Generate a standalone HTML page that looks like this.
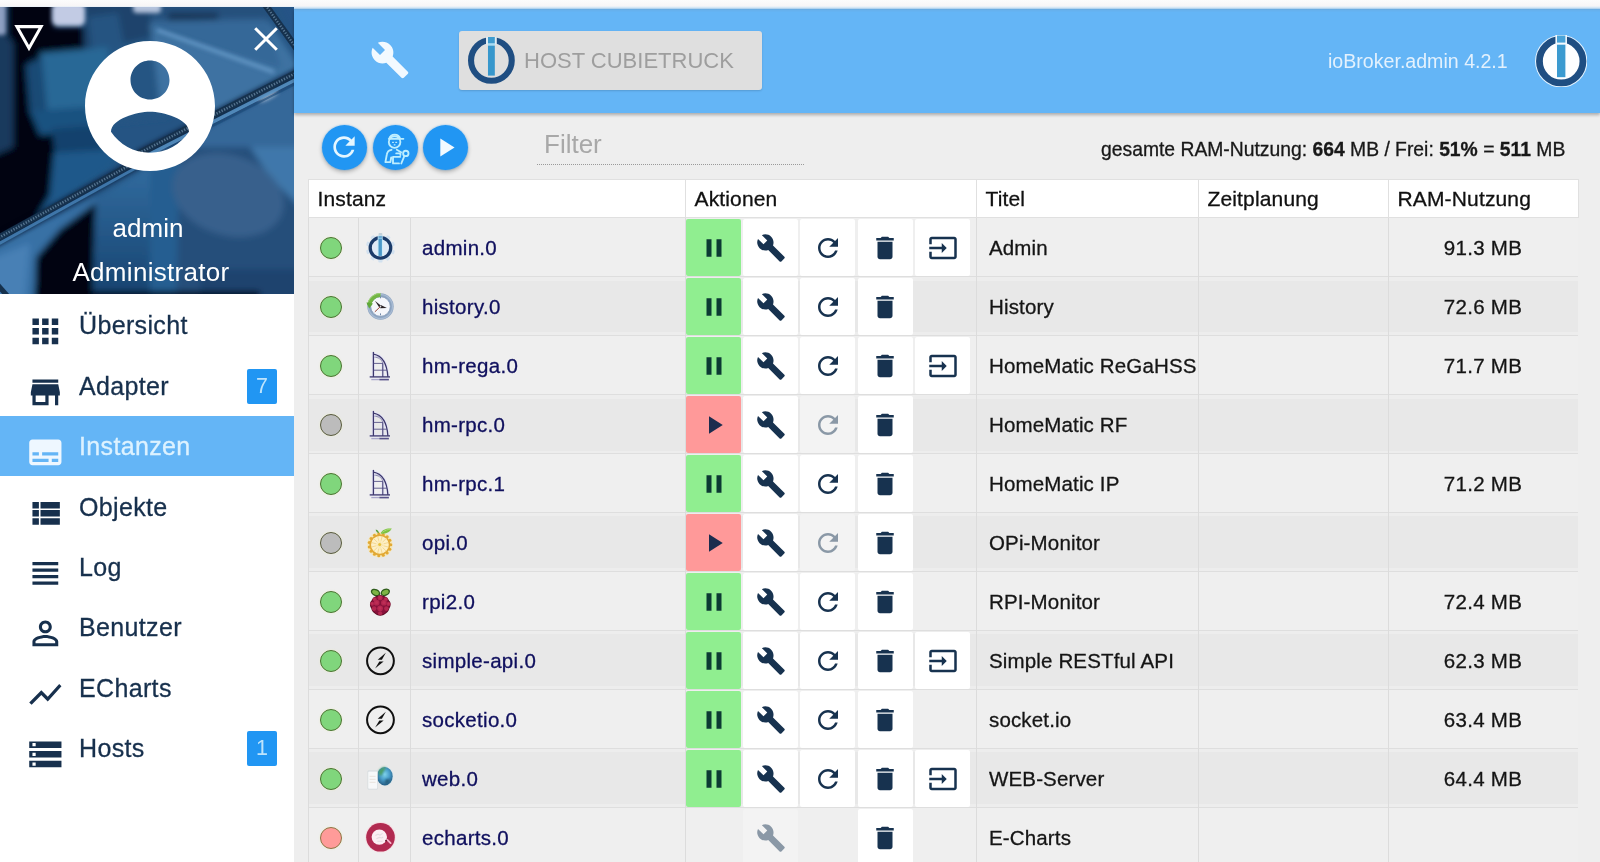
<!DOCTYPE html>
<html lang="de">
<head>
<meta charset="utf-8">
<title>ioBroker.admin</title>
<style>
*{box-sizing:border-box;margin:0;padding:0}
html,body{width:1600px;height:862px;overflow:hidden}
body{position:relative;background:#eeeeee;font-family:"Liberation Sans",sans-serif;color:#111}
.abs{position:absolute}
svg{display:block}
.tx,.nm,.ti,.rm,.th,.uname,#ram,#filter,#ver,#hostbtn .t,.badge{will-change:transform}
.tx,.nm,.ti,.rm,.th,#ram{-webkit-text-stroke:.3px currentColor}
/* top strip */
#topstrip{left:0;top:0;width:1600px;height:9px;background:linear-gradient(#fcfcfc 0,#f8f6f7 5.5px,#e6eff8 7px,#b7d6f0 8.5px,#8fc0ea 9px)}
/* sidebar */
#side{left:0;top:7px;width:294px;height:855px;background:#fff}
#sidehead{left:0;top:0;width:294px;height:287px;overflow:hidden;background:#1d4a78}
.uname{left:0;width:294px;text-align:center;color:#fff;font-size:26px;line-height:30px;white-space:nowrap}
.mi{left:0;width:294px;height:60px}
.mi .ic{position:absolute;left:26px;top:17px;width:38.7px;height:38.7px;fill:#17304d}
.mi .tx{position:absolute;left:79px;top:0;height:60px;line-height:60px;font-size:25px;color:#17304d;letter-spacing:.35px;white-space:nowrap}
.mi.sel{background:#64b5f6}
.mi.sel .tx{color:#ddf2ff}
.mi.sel .ic{fill:#eef7ff}
.badge{position:absolute;left:247px;width:30px;height:35px;background:#2196f3;border-radius:2px;color:#bfe4fc;font-size:21.5px;line-height:35px;text-align:center}
/* header */
#hdr{left:294px;top:9px;width:1306px;height:104px;background:linear-gradient(#6aaadd 0,#66b1ee 1.5px,#64b5f6 3.5px);box-shadow:0 2px 3px rgba(0,0,0,.28)}
#hostbtn{left:165px;top:21.6px;width:303px;height:59px;background:#dfdfdf;border-radius:3px;box-shadow:0 1px 2px rgba(0,0,0,.15)}
#hostbtn .t{position:absolute;left:65px;top:0;line-height:59.5px;font-size:22px;color:#9e9e9e;white-space:nowrap}
#ver{right:92px;top:38px;font-size:19.6px;line-height:28px;color:#e3f1fd;white-space:nowrap}
/* toolbar */
.fab{width:45px;height:45px;border-radius:50%;background:#2196f3;box-shadow:0 2px 4px rgba(0,0,0,.28),0 0 0 1px rgba(190,225,255,.55)}
.fab svg{position:absolute}
#filter{left:544px;top:127.5px;font-size:26px;line-height:32px;color:#a8a8a8;white-space:nowrap}
#filterline{left:537px;top:164px;width:267px;border-top:1px dotted #9a9a9a}
#ram{right:35px;top:137px;font-size:19.32px;line-height:26px;color:#181818;white-space:nowrap}
#ram b{font-weight:bold}
/* table */
#tbl{left:308px;top:179px;width:1270px;height:700px}
.th{position:absolute;top:0;height:39px;background:#fff;border:1px solid #e0e0e0;font-size:21px;line-height:37px;padding-left:8.5px;letter-spacing:.15px;white-space:nowrap;color:#111}
.row{position:absolute;left:0;width:1270px;height:59px;background:#efefef;border-bottom:1px solid #dedede}
.row.alt{background:linear-gradient(#ededed 0,#ededed 3.5px,#e8e8e8 3.5px,#e8e8e8 55.5px,#ededed 55.5px)}
.row .sep{position:absolute;top:0;width:1px;height:59px;background:#dcdcdc}
.led{position:absolute;left:12px;top:18.5px;width:22.4px;height:22.4px;border-radius:50%;background:#80d67c;border:1.8px solid #4a7433;box-shadow:0 0 2px rgba(235,238,200,.9)}
.led.off{background:#bcbcbc;border-color:#585a40}
.led.err{background:#ff9b99;border-color:#8f7446}
.aicon{position:absolute;left:56px;top:13px;width:33px;height:33px}
.nm{position:absolute;left:113.5px;top:0;line-height:59px;font-size:20.5px;color:#10105e;white-space:nowrap;letter-spacing:.3px}
.ti{position:absolute;left:680.5px;top:0;line-height:59px;font-size:20.5px;color:#151515;white-space:nowrap;letter-spacing:.15px}
.rm{position:absolute;left:1080px;width:190px;top:0;line-height:59px;font-size:20.5px;color:#151515;text-align:center;white-space:nowrap;letter-spacing:.3px}
.btn{position:absolute;top:1px;width:55.3px;height:56.5px;background:#fff;border-radius:2px}
.btn svg{position:absolute;left:12.8px;top:14.2px;width:30px;height:30px;fill:#17324f}
.btn.g{background:#90ee90}
.btn.g svg{fill:#0c3a33}
.btn.r{background:#ff9999}
.btn.r svg{fill:#1c2c4e}
.btn.dis{background:#f3f3f3}
.btn.dis svg{fill:#8a98a6}
.b1{left:378px}.b2{left:435px}.b3{left:492.2px}.b4{left:549.6px}.b5{left:606.9px}
</style>
</head>
<body>
<div id="topstrip" class="abs"></div>
<div id="side" class="abs">
  <div id="sidehead" class="abs"><svg class="abs" style="left:0;top:0" width="294" height="287" viewBox="0 0 294 287">
<defs>
<filter id="bl4" x="-20%" y="-20%" width="140%" height="140%"><feGaussianBlur stdDeviation="3.200"/></filter>
<filter id="bl2" x="-20%" y="-20%" width="140%" height="140%"><feGaussianBlur stdDeviation="2"/></filter>
<filter id="bl1" x="-20%" y="-20%" width="140%" height="140%"><feGaussianBlur stdDeviation=".7"/></filter>
<linearGradient id="gR" x1="0" y1="0" x2="0" y2="1"><stop offset="0" stop-color="#4a7db0"/><stop offset="1" stop-color="#2d5c8e"/></linearGradient>
<linearGradient id="gM" x1="0" y1="0" x2="0" y2="1"><stop offset="0" stop-color="#3c7fb8"/><stop offset="1" stop-color="#184878"/></linearGradient>
</defs>
<rect width="294" height="287" fill="#2a5f92"/>
<g filter="url(#bl4)">
 <!-- top-left -->
 <rect x="-10" y="-10" width="26" height="170" fill="#1c3f66"/>
 <polygon points="7,-8 54,-8 54,50 40,58 40,100 58,118 54,150 50,190 34,216 -10,238 -10,150 13,140 13,36 7,28" fill="#01030a"/>
 <rect x="46" y="20" width="42" height="30" fill="#02050f"/>
 <rect x="84" y="-8" width="70" height="52" fill="#214c77"/>
 <polygon points="88,10 118,6 124,38 92,42" fill="#2c5f90"/>
 <polygon points="40,46 108,40 112,112 46,116" fill="#2f76a8"/>
 <polygon points="26,58 42,50 48,112 30,106" fill="#1d5282"/>
 <polygon points="30,104 86,100 100,124 40,128" fill="#1f5c8e"/>
 <polygon points="52,122 104,118 108,150 56,150" fill="#174a78"/>
 <polygon points="108,40 160,28 168,110 112,116" fill="#2b6092"/>
 <!-- top-right -->
 <rect x="150" y="-8" width="120" height="22" fill="#2a5a8a"/>
 <rect x="168" y="6" width="50" height="8" fill="#163458"/>
 <polygon points="150,16 268,14 300,60 214,106 160,100" fill="#4682b6"/>
 <polygon points="152,14 266,12 282,62 160,26" fill="#3d76aa"/>
 <polygon points="215,116 300,72 300,150 230,150 180,140" fill="#3c76ac"/>
 <polygon points="276,-8 300,-8 300,40" fill="#2a5f95"/>
 <!-- lower-left -->
 <polygon points="54,146 120,142 112,160 36,212 50,188" fill="#22639a"/>
 <polygon points="-10,240 100,188 96,200 60,222 36,250 34,300 -10,300" fill="#3f80ba"/>
 <polygon points="-10,252 30,236 24,300 -10,300" fill="#5292cc"/>
 <polygon points="34,300 36,250 60,222 98,194 93,300" fill="#02050e"/>
 <!-- lower-mid/right -->
 <polygon points="96,190 172,146 172,300 92,300" fill="url(#gM)"/>
 <polygon points="168,140 300,140 300,300 168,300" fill="#2a5888"/>
 <polygon points="150,150 180,140 176,300 150,300" fill="#2c6aa2"/>
 <polygon points="250,140 300,140 300,200 270,170" fill="#4a88c0"/>
 <ellipse cx="228" cy="188" rx="57" ry="40" fill="#416d9d" transform="rotate(18 228 188)"/>
 <rect x="200" y="262" width="100" height="40" fill="#214b7a"/>
 <rect x="80" y="284" width="180" height="8" fill="#02060f"/>
</g>
<rect width="294" height="287" fill="#051428" opacity=".14"/>
<g filter="url(#bl2)">
 <rect x="52" y="-4" width="33" height="23" rx="6" fill="#c2cbe4"/>
 <rect x="133" y="-6" width="28" height="12" rx="4" fill="#b4c2dc"/>
 <rect x="-6" y="-4" width="12" height="32" rx="3" fill="#8fa0c2"/>
 <line x1="157" y1="23" x2="274" y2="65" stroke="#6da0cf" stroke-width="3"/>
 <ellipse cx="268" cy="89" rx="11" ry="2.400" fill="#e4f0fb" transform="rotate(-27 268 89)"/>
 <ellipse cx="160" cy="148" rx="10" ry="2" fill="#9cc4e8" transform="rotate(-27 160 148)"/>
</g>
<g filter="url(#bl2)" opacity=".55">
 <line x1="300" y1="66" x2="138" y2="148.600" stroke="#06101f" stroke-width="11"/>
 <line x1="142" y1="153.500" x2="-6" y2="235.400" stroke="#06101f" stroke-width="11"/>
</g>
<g filter="url(#bl1)">
 <!-- diagonal zipper, right segment -->
 <line x1="300" y1="64" x2="138" y2="146.600" stroke="#16304e" stroke-width="6.500"/>
 <line x1="300" y1="64" x2="138" y2="146.600" stroke="#56758f" stroke-width="2.600" stroke-dasharray="1.300 1.500"/>
 <line x1="300" y1="70.500" x2="138" y2="153.100" stroke="#5f9bd0" stroke-width="3.500" opacity=".8"/>
 <line x1="300" y1="74.500" x2="138" y2="157.100" stroke="#1e4c7c" stroke-width="2" opacity=".7"/>
 <!-- left segment -->
 <line x1="142" y1="151.500" x2="-6" y2="233.400" stroke="#16304e" stroke-width="6.500"/>
 <line x1="142" y1="151.500" x2="-6" y2="233.400" stroke="#56758f" stroke-width="2.600" stroke-dasharray="1.300 1.500"/>
 <line x1="142" y1="157.500" x2="-6" y2="239.400" stroke="#4a86be" stroke-width="3" opacity=".8"/>
 <!-- vertical zipper right -->
 <line x1="264" y1="-4" x2="297" y2="42" stroke="#16304e" stroke-width="6.500"/>
 <line x1="264" y1="-4" x2="297" y2="42" stroke="#56758f" stroke-width="2.400" stroke-dasharray="1.300 1.500"/>
 <line x1="-4" y1="276" x2="10" y2="292" stroke="#16304e" stroke-width="5"/>
</g>
</svg>
<svg class="abs" style="left:11.300px;top:12.700px;fill:#fff" width="36" height="36" viewBox="0 0 24 24"><path d="M2.200 3.400l9.800 17.400 9.800-17.400H2.200zm3.500 2.100h12.600L12 16.600 5.700 5.500z"/></svg>
<svg class="abs" style="left:252px;top:18px" width="28" height="28" viewBox="0 0 28 28"><path d="M3.200 3.200L24.800 24.800M24.800 3.200L3.200 24.800" stroke="#fff" stroke-width="3" fill="none"/></svg>
<svg class="abs" style="left:72px;top:21px;fill:#fff" width="156" height="156" viewBox="0 0 24 24"><path d="M12 2C6.480 2 2 6.480 2 12s4.480 10 10 10 10-4.480 10-10S17.520 2 12 2zm0 3c1.660 0 3 1.340 3 3s-1.340 3-3 3-3-1.340-3-3 1.340-3 3-3zm0 14.200c-2.500 0-4.710-1.280-6-3.220.030-1.990 4-3.080 6-3.080 1.990 0 5.970 1.090 6 3.080-1.290 1.940-3.500 3.220-6 3.220z"/></svg>
<div class="abs uname" style="top:206px;left:.5px">admin</div>
<div class="abs uname" style="top:250px;left:4px;letter-spacing:.3px">Administrator</div>
</div>
  <div class="abs mi" style="top:288px"><svg class="ic" viewBox="0 0 24 24"><path d="M4 8h4V4H4v4zm6 12h4v-4h-4v4zm-6 0h4v-4H4v4zm0-6h4v-4H4v4zm6 0h4v-4h-4v4zm6-10v4h4V4h-4zm-6 4h4V4h-4v4zm6 6h4v-4h-4v4zm0 6h4v-4h-4v4z"/></svg><div class="tx">Übersicht</div></div>
  <div class="abs mi" style="top:349px"><svg class="ic" viewBox="0 0 24 24"><path d="M20 4H4v2h16V4zm1 10v-2l-1-5H4l-1 5v2h1v6h10v-6h4v6h2v-6h1zm-9 4H6v-4h6v4z"/></svg><div class="tx">Adapter</div><div class="badge" style="top:13px">7</div></div>
  <div class="abs mi sel" style="top:409px"><svg class="ic" viewBox="0 0 24 24"><path d="M20 4H4c-1.100 0-2 .900-2 2v12c0 1.100.900 2 2 2h16c1.100 0 2-.900 2-2V6c0-1.100-.900-2-2-2zM4 12h4v2H4v-2zm10 6H4v-2h10v2zm6 0h-4v-2h4v2zm0-4H10v-2h10v2z"/></svg><div class="tx">Instanzen</div></div>
  <div class="abs mi" style="top:470px"><svg class="ic" viewBox="0 0 24 24"><path d="M4 14h4v-4H4v4zm0 5h4v-4H4v4zM4 9h4V5H4v4zm5 5h12v-4H9v4zm0 5h12v-4H9v4zM9 5v4h12V5H9z"/></svg><div class="tx">Objekte</div></div>
  <div class="abs mi" style="top:530px"><svg class="ic" viewBox="0 0 24 24"><path d="M4 15h16v-2H4v2zm0 4h16v-2H4v2zm0-8h16V9H4v2zm0-6v2h16V5H4z"/></svg><div class="tx">Log</div></div>
  <div class="abs mi" style="top:590px"><svg class="ic" viewBox="0 0 24 24"><path d="M12 5.900c1.160 0 2.100.940 2.100 2.100s-.940 2.100-2.100 2.100S9.900 9.160 9.900 8s.940-2.100 2.100-2.100m0 9c2.970 0 6.100 1.460 6.100 2.100v1.100H5.900V17c0-.640 3.130-2.100 6.100-2.100M12 4C9.790 4 8 5.790 8 8s1.790 4 4 4 4-1.790 4-4-1.790-4-4-4zm0 9c-2.670 0-8 1.340-8 4v3h16v-3c0-2.660-5.330-4-8-4z"/></svg><div class="tx">Benutzer</div></div>
  <div class="abs mi" style="top:651px"><svg class="ic" viewBox="0 0 24 24"><path d="M3.500 18.490l6-6.010 4 4L22 6.920l-1.410-1.410-7.090 7.970-4-4L2 16.990z"/></svg><div class="tx">ECharts</div></div>
  <div class="abs mi" style="top:711px"><svg class="ic" viewBox="0 0 24 24"><path d="M2 20h20v-4H2v4zm2-3h2v2H4v-2zM2 4v4h20V4H2zm4 3H4V5h2v2zm-4 7h20v-4H2v4zm2-3h2v2H4v-2z"/></svg><div class="tx">Hosts</div><div class="badge" style="top:13px">1</div></div>
</div>
<div id="hdr" class="abs">
  <svg class="abs" style="left:76px;top:31px;width:40px;height:40px;fill:#f2f9ff" viewBox="0 0 24 24"><path d="M22.7 19l-9.1-9.1c.9-2.3.4-5-1.5-6.9-2-2-5-2.4-7.4-1.300L9 6 6 9 1.600 4.700C.400 7.100.900 10.100 2.900 12.100c1.900 1.900 4.600 2.400 6.900 1.500l9.100 9.100c.400.400 1 .400 1.400 0l2.300-2.300c.500-.400.500-1.100.100-1.400z"/></svg>
  <div id="hostbtn" class="abs"><svg class="abs" style="left:9.200px;top:6.700px" width="46.8" height="46.8" viewBox="0 0 100 100"><circle cx="50" cy="50" r="43.500" fill="none" stroke="#1f4e82" stroke-width="13"/><rect x="38.500" y="-1" width="23" height="17" fill="#e3edf4"/><rect x="42.700" y="0" width="14.600" height="14" fill="#3f9ccf"/><rect x="42.700" y="14" width="14.600" height="4.500" fill="#a4def8"/><rect x="42.700" y="18.500" width="14.600" height="64" fill="#3797cc"/></svg><div class="t">HOST CUBIETRUCK</div></div>
  <div id="ver" class="abs">ioBroker.admin 4.2.1</div>
  <svg class="abs" style="left:1240.500px;top:25.700px" width="52.4" height="52.4" viewBox="0 0 100 100"><circle cx="50" cy="50" r="50" fill="#e6f4ff"/><circle cx="50" cy="50" r="36" fill="#fdfeff"/><circle cx="50" cy="50" r="41.500" fill="none" stroke="#1f4e82" stroke-width="13"/><rect x="39" y="0" width="22" height="24" fill="#f4faff"/><rect x="42" y="1" width="16" height="13.500" fill="#49a3d8"/><rect x="42" y="18.500" width="16" height="62" fill="#3b9ad0"/></svg>
</div>

<div class="abs fab" style="left:322px;top:125px"><svg style="left:6px;top:6px;width:32px;height:32px;fill:#e4f6ff" viewBox="0 0 24 24"><path d="M17.650 6.350C16.200 4.900 14.210 4 12 4c-4.420 0-7.990 3.580-7.990 8s3.570 8 7.990 8c3.730 0 6.840-2.550 7.730-6h-2.080c-.820 2.330-3.040 4-5.650 4-3.310 0-6-2.690-6-6s2.690-6 6-6c1.660 0 3.140.690 4.220 1.780L13 11h7V4l-2.350 2.350z"/></svg></div>
<div class="abs fab" style="left:372.500px;top:125px"><svg style="left:0;top:0" width="45" height="45" viewBox="0 0 45 45" fill="none" stroke="#bdeeff" stroke-width="1.850" stroke-linecap="round" stroke-linejoin="round"><circle cx="21.600" cy="17" r="5.800"/><path d="M16.200 13.800a5.700 5.700 0 0 1 11 0M15.800 13.800h14.600"/><path d="M19.600 17.300h.8M22.800 17.300h.8M21.200 19.800h.8" stroke-width="1.300"/><path d="M18.500 24.800c-3.200.400-4.200 2-4.600 4.400l-1.500 7.900h5l.8-4.600"/><path d="M23.800 24.800l4.300 2.400"/><path d="M23.200 28.400h4.200v1.600"/><path d="M27.200 31.800h-7.200v6.600h6"/><circle cx="32.800" cy="28.400" r="2.700"/><path d="M31.400 30.900l-3.100 7.600"/></svg></div>
<div class="abs fab" style="left:423px;top:125px"><svg style="left:7px;top:7px;width:31px;height:31px;fill:#f2faff" viewBox="0 0 24 24"><path d="M8 5v14l11-7z"/></svg></div>
<div id="filter" class="abs">Filter</div>
<div id="filterline" class="abs"></div>
<div id="ram" class="abs">gesamte RAM-Nutzung: <b>664</b> MB / Frei: <b>51%</b> = <b>511</b> MB</div>

<div id="tbl" class="abs"><div class="th" style="left:0px;width:378px">Instanz</div>
<div class="th" style="left:377px;width:292px">Aktionen</div>
<div class="th" style="left:668px;width:223px">Titel</div>
<div class="th" style="left:890px;width:191px">Zeitplanung</div>
<div class="th" style="left:1080px;width:191px">RAM-Nutzung</div>
<div class="row" style="top:39px"><div class="led"></div><div class="aicon"><svg width="33" height="33" viewBox="0 0 33 33"><rect x="14.400" y="2.300" width="4.200" height="3.600" rx="1" fill="#d2e1ef" transform="rotate(36 16.460 16.900)"/><rect x="14.400" y="2.300" width="4.200" height="3.600" rx="1" fill="#d2e1ef" transform="rotate(72 16.460 16.900)"/><rect x="14.400" y="2.300" width="4.200" height="3.600" rx="1" fill="#d2e1ef" transform="rotate(108 16.460 16.900)"/><rect x="14.400" y="2.300" width="4.200" height="3.600" rx="1" fill="#d2e1ef" transform="rotate(144 16.460 16.900)"/><rect x="14.400" y="2.300" width="4.200" height="3.600" rx="1" fill="#d2e1ef" transform="rotate(180 16.460 16.900)"/><rect x="14.400" y="2.300" width="4.200" height="3.600" rx="1" fill="#d2e1ef" transform="rotate(216 16.460 16.900)"/><rect x="14.400" y="2.300" width="4.200" height="3.600" rx="1" fill="#d2e1ef" transform="rotate(252 16.460 16.900)"/><rect x="14.400" y="2.300" width="4.200" height="3.600" rx="1" fill="#d2e1ef" transform="rotate(288 16.460 16.900)"/><rect x="14.400" y="2.300" width="4.200" height="3.600" rx="1" fill="#d2e1ef" transform="rotate(324 16.460 16.900)"/><rect x="14.600" y="1.900" width="3.700" height="3.400" rx=".8" fill="#c4d3db"/><circle cx="16.460" cy="16.900" r="12.600" fill="#dbe7f3" opacity=".55"/><circle cx="16.460" cy="16.900" r="11" fill="#dfeaf6"/><circle cx="16.460" cy="16.900" r="10.250" fill="none" stroke="#1a3a68" stroke-width="3.250"/><rect x="13.700" y="4.600" width="5" height="4.600" fill="#b7ddf3"/><rect x="13.400" y="8.600" width="5.600" height="16.400" fill="#c7ecfb" opacity=".7"/><rect x="14.500" y="5" width="3.400" height="2.600" fill="#69a9d2"/><rect x="14.500" y="8" width="3.400" height="16.900" fill="#4a98c8"/></svg></div><div class="nm">admin.0</div><div class="sep" style="left:0px"></div><div class="sep" style="left:50px"></div><div class="sep" style="left:102px"></div><div class="sep" style="left:377px"></div><div class="sep" style="left:668px"></div><div class="sep" style="left:890px"></div><div class="sep" style="left:1080px"></div><div class="btn g b1"><svg viewBox="0 0 24 24"><path d="M6 19h4V5H6v14zm8-14v14h4V5h-4z"/></svg></div><div class="btn b2"><svg viewBox="0 0 24 24"><path d="M22.7 19l-9.1-9.1c.9-2.3.4-5-1.5-6.9-2-2-5-2.4-7.4-1.300L9 6 6 9 1.600 4.700C.400 7.100.900 10.100 2.900 12.100c1.900 1.900 4.600 2.400 6.900 1.500l9.100 9.100c.400.400 1 .400 1.400 0l2.300-2.300c.500-.400.500-1.100.100-1.400z"/></svg></div><div class="btn b3"><svg viewBox="0 0 24 24"><path d="M17.650 6.350C16.200 4.900 14.210 4 12 4c-4.420 0-7.990 3.580-7.990 8s3.570 8 7.990 8c3.730 0 6.840-2.550 7.730-6h-2.080c-.820 2.330-3.040 4-5.650 4-3.310 0-6-2.690-6-6s2.690-6 6-6c1.660 0 3.140.690 4.220 1.780L13 11h7V4l-2.350 2.350z"/></svg></div><div class="btn b4"><svg viewBox="0 0 24 24"><path d="M6 19c0 1.100.900 2 2 2h8c1.100 0 2-.900 2-2V7H6v12zM19 4h-3.500l-1-1h-5l-1 1H5v2h14V4z"/></svg></div><div class="btn b5"><svg viewBox="0 0 24 24"><path d="M21 3.010H3c-1.100 0-2 .900-2 2V9h2V4.990h18v14.030H3V15H1v4.010c0 1.100.900 1.980 2 1.980h18c1.100 0 2-.880 2-1.980v-14c0-1.110-.900-2-2-2zM11 16l4-4-4-4v3H1v2h10v3z"/></svg></div><div class="ti">Admin</div><div class="rm">91.3 MB</div></div>
<div class="row alt" style="top:98px"><div class="led"></div><div class="aicon"><svg width="33" height="33" viewBox="0 0 33 33"><circle cx="16.500" cy="16.500" r="13.200" fill="#8fa6c2"/><circle cx="16.500" cy="16.500" r="12" fill="none" stroke="#a9bcd4" stroke-width="1.200"/><circle cx="16.500" cy="16.500" r="9.800" fill="#f5f7fb"/><circle cx="16.500" cy="16.500" r="9.800" fill="none" stroke="#7a92b2" stroke-width=".7"/><path d="M16.500 5.100a11.400 11.400 0 0 0-11.300 10" fill="none" stroke="#72b544" stroke-width="4"/><path d="M2.400 12.600l6.600.8-3.900 5.200z" fill="#5fa838"/><path d="M16.500 3.400a13.100 13.100 0 0 0-12.400 8.800" fill="none" stroke="#a5d67e" stroke-width="1" opacity=".8"/><path d="M16.500 16.500l-1.200.9-4.400-6.700 5.900 4.800z" fill="#2a2326"/><path d="M16.500 16.500l.3-1.500 6.100 3.100-6.700.1z" fill="#2a2326"/><path d="M16.500 16.500l-5.400 5.100" stroke="#9c4a3c" stroke-width="1" stroke-linecap="round"/><circle cx="16.500" cy="16.500" r=".8" fill="#ddd"/><path d="M16.500 6.600v1.700M16.500 23.400v1.900" stroke="#6f86a6" stroke-width="1"/></svg></div><div class="nm">history.0</div><div class="sep" style="left:0px"></div><div class="sep" style="left:50px"></div><div class="sep" style="left:102px"></div><div class="sep" style="left:377px"></div><div class="sep" style="left:668px"></div><div class="sep" style="left:890px"></div><div class="sep" style="left:1080px"></div><div class="btn g b1"><svg viewBox="0 0 24 24"><path d="M6 19h4V5H6v14zm8-14v14h4V5h-4z"/></svg></div><div class="btn b2"><svg viewBox="0 0 24 24"><path d="M22.7 19l-9.1-9.1c.9-2.3.4-5-1.5-6.9-2-2-5-2.4-7.4-1.300L9 6 6 9 1.600 4.700C.400 7.100.900 10.100 2.900 12.100c1.900 1.900 4.600 2.400 6.900 1.500l9.100 9.100c.400.400 1 .400 1.400 0l2.300-2.300c.500-.400.500-1.100.100-1.400z"/></svg></div><div class="btn b3"><svg viewBox="0 0 24 24"><path d="M17.650 6.350C16.200 4.900 14.210 4 12 4c-4.420 0-7.990 3.580-7.990 8s3.570 8 7.990 8c3.730 0 6.840-2.550 7.730-6h-2.080c-.820 2.330-3.040 4-5.650 4-3.310 0-6-2.690-6-6s2.690-6 6-6c1.660 0 3.140.690 4.220 1.780L13 11h7V4l-2.350 2.350z"/></svg></div><div class="btn b4"><svg viewBox="0 0 24 24"><path d="M6 19c0 1.100.900 2 2 2h8c1.100 0 2-.900 2-2V7H6v12zM19 4h-3.500l-1-1h-5l-1 1H5v2h14V4z"/></svg></div><div class="ti">History</div><div class="rm">72.6 MB</div></div>
<div class="row" style="top:157px"><div class="led"></div><div class="aicon"><svg width="33" height="33" viewBox="0 0 33 33" fill="none" stroke="#3c376c"><path d="M9.400 2.900v25M9.400 5.200c8 1.400 13.600 9 14.500 22.700M18.800 14.500v13.400M5.700 27.900h20.300" stroke="#e4e3f8" stroke-width="3.200" opacity=".8"/><path d="M9.400 2.900v25" stroke-width="1.300"/><path d="M9.400 5.200c8 1.400 13.600 9 14.500 22.700" stroke-width="1.250"/><path d="M11.500 8.200c4.600 1 6.600 3.400 7.300 6.300" stroke-width=".7" stroke="#6d699c"/><path d="M18.800 14.500v13.400" stroke-width="1.050"/><path d="M9.400 14.400h9.600M9.400 21.200h13.400" stroke-width=".85" stroke="#4f4a82"/><path d="M10 8.200h5" stroke-width=".6" stroke="#8a87b4"/><path d="M5.700 27.900h20.300" stroke-width="1.300"/><path d="M7.300 30.600h7.800" stroke="#a9a7cb" stroke-width="1.300"/><path d="M15.300 30.600h9.600" stroke="#57528a" stroke-width="1.600"/></svg></div><div class="nm">hm-rega.0</div><div class="sep" style="left:0px"></div><div class="sep" style="left:50px"></div><div class="sep" style="left:102px"></div><div class="sep" style="left:377px"></div><div class="sep" style="left:668px"></div><div class="sep" style="left:890px"></div><div class="sep" style="left:1080px"></div><div class="btn g b1"><svg viewBox="0 0 24 24"><path d="M6 19h4V5H6v14zm8-14v14h4V5h-4z"/></svg></div><div class="btn b2"><svg viewBox="0 0 24 24"><path d="M22.7 19l-9.1-9.1c.9-2.3.4-5-1.5-6.9-2-2-5-2.4-7.4-1.300L9 6 6 9 1.600 4.700C.400 7.100.900 10.100 2.900 12.100c1.900 1.900 4.600 2.400 6.900 1.500l9.100 9.100c.400.400 1 .400 1.400 0l2.300-2.300c.500-.400.500-1.100.100-1.400z"/></svg></div><div class="btn b3"><svg viewBox="0 0 24 24"><path d="M17.650 6.350C16.200 4.900 14.210 4 12 4c-4.420 0-7.990 3.580-7.990 8s3.570 8 7.990 8c3.730 0 6.840-2.550 7.730-6h-2.080c-.820 2.330-3.040 4-5.650 4-3.310 0-6-2.690-6-6s2.690-6 6-6c1.660 0 3.140.690 4.220 1.780L13 11h7V4l-2.350 2.350z"/></svg></div><div class="btn b4"><svg viewBox="0 0 24 24"><path d="M6 19c0 1.100.900 2 2 2h8c1.100 0 2-.900 2-2V7H6v12zM19 4h-3.500l-1-1h-5l-1 1H5v2h14V4z"/></svg></div><div class="btn b5"><svg viewBox="0 0 24 24"><path d="M21 3.010H3c-1.100 0-2 .900-2 2V9h2V4.990h18v14.030H3V15H1v4.010c0 1.100.900 1.980 2 1.980h18c1.100 0 2-.880 2-1.980v-14c0-1.110-.900-2-2-2zM11 16l4-4-4-4v3H1v2h10v3z"/></svg></div><div class="ti">HomeMatic ReGaHSS</div><div class="rm">71.7 MB</div></div>
<div class="row alt" style="top:216px"><div class="led off"></div><div class="aicon"><svg width="33" height="33" viewBox="0 0 33 33" fill="none" stroke="#3c376c"><path d="M9.400 2.900v25M9.400 5.200c8 1.400 13.600 9 14.500 22.700M18.800 14.500v13.400M5.700 27.900h20.300" stroke="#e4e3f8" stroke-width="3.200" opacity=".8"/><path d="M9.400 2.900v25" stroke-width="1.300"/><path d="M9.400 5.200c8 1.400 13.600 9 14.500 22.700" stroke-width="1.250"/><path d="M11.500 8.200c4.600 1 6.600 3.400 7.300 6.300" stroke-width=".7" stroke="#6d699c"/><path d="M18.800 14.500v13.400" stroke-width="1.050"/><path d="M9.400 14.400h9.600M9.400 21.200h13.400" stroke-width=".85" stroke="#4f4a82"/><path d="M10 8.200h5" stroke-width=".6" stroke="#8a87b4"/><path d="M5.700 27.900h20.300" stroke-width="1.300"/><path d="M7.300 30.600h7.800" stroke="#a9a7cb" stroke-width="1.300"/><path d="M15.300 30.600h9.600" stroke="#57528a" stroke-width="1.600"/></svg></div><div class="nm">hm-rpc.0</div><div class="sep" style="left:0px"></div><div class="sep" style="left:50px"></div><div class="sep" style="left:102px"></div><div class="sep" style="left:377px"></div><div class="sep" style="left:668px"></div><div class="sep" style="left:890px"></div><div class="sep" style="left:1080px"></div><div class="btn r b1"><svg viewBox="0 0 24 24"><path d="M8 5v14l11-7z"/></svg></div><div class="btn b2"><svg viewBox="0 0 24 24"><path d="M22.7 19l-9.1-9.1c.9-2.3.4-5-1.5-6.9-2-2-5-2.4-7.4-1.300L9 6 6 9 1.600 4.700C.400 7.100.900 10.100 2.900 12.100c1.900 1.900 4.600 2.400 6.900 1.500l9.100 9.100c.400.400 1 .400 1.400 0l2.300-2.300c.500-.400.500-1.100.100-1.400z"/></svg></div><div class="btn dis b3"><svg viewBox="0 0 24 24"><path d="M17.650 6.350C16.200 4.900 14.210 4 12 4c-4.420 0-7.990 3.580-7.990 8s3.570 8 7.990 8c3.730 0 6.840-2.550 7.730-6h-2.080c-.820 2.330-3.040 4-5.650 4-3.310 0-6-2.690-6-6s2.690-6 6-6c1.660 0 3.140.690 4.220 1.780L13 11h7V4l-2.350 2.350z"/></svg></div><div class="btn b4"><svg viewBox="0 0 24 24"><path d="M6 19c0 1.100.900 2 2 2h8c1.100 0 2-.900 2-2V7H6v12zM19 4h-3.500l-1-1h-5l-1 1H5v2h14V4z"/></svg></div><div class="ti">HomeMatic RF</div><div class="rm"></div></div>
<div class="row" style="top:275px"><div class="led"></div><div class="aicon"><svg width="33" height="33" viewBox="0 0 33 33" fill="none" stroke="#3c376c"><path d="M9.400 2.900v25M9.400 5.200c8 1.400 13.600 9 14.500 22.700M18.800 14.500v13.400M5.700 27.900h20.300" stroke="#e4e3f8" stroke-width="3.200" opacity=".8"/><path d="M9.400 2.900v25" stroke-width="1.300"/><path d="M9.400 5.200c8 1.400 13.600 9 14.500 22.700" stroke-width="1.250"/><path d="M11.500 8.200c4.600 1 6.600 3.400 7.300 6.300" stroke-width=".7" stroke="#6d699c"/><path d="M18.800 14.500v13.400" stroke-width="1.050"/><path d="M9.400 14.400h9.600M9.400 21.200h13.400" stroke-width=".85" stroke="#4f4a82"/><path d="M10 8.200h5" stroke-width=".6" stroke="#8a87b4"/><path d="M5.700 27.900h20.300" stroke-width="1.300"/><path d="M7.300 30.600h7.800" stroke="#a9a7cb" stroke-width="1.300"/><path d="M15.300 30.600h9.600" stroke="#57528a" stroke-width="1.600"/></svg></div><div class="nm">hm-rpc.1</div><div class="sep" style="left:0px"></div><div class="sep" style="left:50px"></div><div class="sep" style="left:102px"></div><div class="sep" style="left:377px"></div><div class="sep" style="left:668px"></div><div class="sep" style="left:890px"></div><div class="sep" style="left:1080px"></div><div class="btn g b1"><svg viewBox="0 0 24 24"><path d="M6 19h4V5H6v14zm8-14v14h4V5h-4z"/></svg></div><div class="btn b2"><svg viewBox="0 0 24 24"><path d="M22.7 19l-9.1-9.1c.9-2.3.4-5-1.5-6.9-2-2-5-2.4-7.4-1.300L9 6 6 9 1.600 4.700C.400 7.100.900 10.100 2.900 12.100c1.900 1.900 4.600 2.400 6.900 1.500l9.100 9.100c.400.400 1 .400 1.400 0l2.300-2.300c.500-.400.500-1.100.100-1.400z"/></svg></div><div class="btn b3"><svg viewBox="0 0 24 24"><path d="M17.650 6.350C16.200 4.900 14.210 4 12 4c-4.420 0-7.990 3.580-7.990 8s3.570 8 7.990 8c3.730 0 6.840-2.550 7.730-6h-2.080c-.820 2.330-3.040 4-5.650 4-3.310 0-6-2.690-6-6s2.690-6 6-6c1.660 0 3.140.690 4.220 1.780L13 11h7V4l-2.350 2.350z"/></svg></div><div class="btn b4"><svg viewBox="0 0 24 24"><path d="M6 19c0 1.100.900 2 2 2h8c1.100 0 2-.900 2-2V7H6v12zM19 4h-3.500l-1-1h-5l-1 1H5v2h14V4z"/></svg></div><div class="ti">HomeMatic IP</div><div class="rm">71.2 MB</div></div>
<div class="row alt" style="top:334px"><div class="led off"></div><div class="aicon"><svg width="33" height="33" viewBox="0 0 33 33"><circle cx="15.900" cy="18.800" r="12.700" fill="#fbe7a4" opacity=".7"/><circle cx="26.80" cy="18.80" r="1.500" fill="#e2a935"/><circle cx="25.86" cy="23.23" r="1.500" fill="#e2a935"/><circle cx="23.19" cy="26.90" r="1.500" fill="#e2a935"/><circle cx="19.27" cy="29.17" r="1.500" fill="#e2a935"/><circle cx="14.76" cy="29.64" r="1.500" fill="#e2a935"/><circle cx="10.45" cy="28.24" r="1.500" fill="#e2a935"/><circle cx="7.08" cy="25.21" r="1.500" fill="#e2a935"/><circle cx="5.24" cy="21.07" r="1.500" fill="#e2a935"/><circle cx="5.24" cy="16.53" r="1.500" fill="#e2a935"/><circle cx="7.08" cy="12.39" r="1.500" fill="#e2a935"/><circle cx="10.45" cy="9.36" r="1.500" fill="#e2a935"/><circle cx="14.76" cy="7.96" r="1.500" fill="#e2a935"/><circle cx="19.27" cy="8.43" r="1.500" fill="#e2a935"/><circle cx="23.19" cy="10.70" r="1.500" fill="#e2a935"/><circle cx="25.86" cy="14.37" r="1.500" fill="#e2a935"/><circle cx="15.900" cy="18.800" r="10.500" fill="#e2a935"/><circle cx="15.900" cy="18.800" r="8.900" fill="#fdf0c6"/><path d="M15.900 18.800L24.30 21.05" stroke="#f3d58a" stroke-width=".9"/><path d="M15.900 18.800L22.05 24.95" stroke="#f3d58a" stroke-width=".9"/><path d="M15.900 18.800L18.15 27.20" stroke="#f3d58a" stroke-width=".9"/><path d="M15.900 18.800L13.65 27.20" stroke="#f3d58a" stroke-width=".9"/><path d="M15.900 18.800L9.75 24.95" stroke="#f3d58a" stroke-width=".9"/><path d="M15.900 18.800L7.50 21.05" stroke="#f3d58a" stroke-width=".9"/><path d="M15.900 18.800L7.50 16.55" stroke="#f3d58a" stroke-width=".9"/><path d="M15.900 18.800L9.75 12.65" stroke="#f3d58a" stroke-width=".9"/><path d="M15.900 18.800L13.65 10.40" stroke="#f3d58a" stroke-width=".9"/><path d="M15.900 18.800L18.15 10.40" stroke="#f3d58a" stroke-width=".9"/><path d="M15.900 18.800L22.05 12.65" stroke="#f3d58a" stroke-width=".9"/><path d="M15.900 18.800L24.30 16.55" stroke="#f3d58a" stroke-width=".9"/><circle cx="15.900" cy="18.800" r="4.200" fill="#fdf0c6" opacity=".55"/><circle cx="15.700" cy="18.600" r="1.500" fill="#e9c43c"/><path d="M16.600 7.400c1.800-4.200 6-5.400 11.200-4.900-2.200 3.900-5.800 5.900-11.200 4.900z" fill="#7cc242"/><path d="M18.400 6.300c2.600-2 5.400-2.900 8.600-3.400" stroke="#b4e07e" stroke-width=".8" fill="none"/><path d="M15 7.200c-.3-1.900-1.300-3-3.300-3.600.1 1.900 1.200 3.200 3.300 3.600z" fill="#5a9e34"/></svg></div><div class="nm">opi.0</div><div class="sep" style="left:0px"></div><div class="sep" style="left:50px"></div><div class="sep" style="left:102px"></div><div class="sep" style="left:377px"></div><div class="sep" style="left:668px"></div><div class="sep" style="left:890px"></div><div class="sep" style="left:1080px"></div><div class="btn r b1"><svg viewBox="0 0 24 24"><path d="M8 5v14l11-7z"/></svg></div><div class="btn b2"><svg viewBox="0 0 24 24"><path d="M22.7 19l-9.1-9.1c.9-2.3.4-5-1.5-6.9-2-2-5-2.4-7.4-1.300L9 6 6 9 1.600 4.700C.400 7.100.900 10.100 2.900 12.100c1.900 1.900 4.600 2.400 6.900 1.500l9.100 9.100c.400.400 1 .400 1.400 0l2.300-2.300c.500-.400.500-1.100.100-1.400z"/></svg></div><div class="btn dis b3"><svg viewBox="0 0 24 24"><path d="M17.650 6.350C16.200 4.900 14.210 4 12 4c-4.420 0-7.990 3.580-7.990 8s3.570 8 7.990 8c3.730 0 6.840-2.550 7.730-6h-2.080c-.820 2.330-3.040 4-5.650 4-3.310 0-6-2.690-6-6s2.690-6 6-6c1.660 0 3.140.690 4.220 1.780L13 11h7V4l-2.350 2.350z"/></svg></div><div class="btn b4"><svg viewBox="0 0 24 24"><path d="M6 19c0 1.100.900 2 2 2h8c1.100 0 2-.900 2-2V7H6v12zM19 4h-3.500l-1-1h-5l-1 1H5v2h14V4z"/></svg></div><div class="ti">OPi-Monitor</div><div class="rm"></div></div>
<div class="row" style="top:393px"><div class="led"></div><div class="aicon"><svg width="33" height="33" viewBox="0 0 33 33"><ellipse cx="11.500" cy="7.500" rx="4.900" ry="3.500" transform="rotate(24 11.500 7.500)" fill="#2f5c1c"/><ellipse cx="21.300" cy="7.300" rx="4.900" ry="3.500" transform="rotate(-24 21.300 7.300)" fill="#2f5c1c"/><ellipse cx="11.500" cy="7.500" rx="3.500" ry="2.200" transform="rotate(24 11.500 7.500)" fill="#7db445"/><ellipse cx="21.300" cy="7.300" rx="3.500" ry="2.200" transform="rotate(-24 21.300 7.300)" fill="#7db445"/><path d="M16.300 9.800c-1 .1-1.600.7-1.400 1.500h3c.1-.8-.5-1.400-1.600-1.500z" fill="#2a2a14"/><path d="M16.300 10.400C20.800 10.400 24 12.400 25 15.400 27 17 27.100 21 25.500 23 25 26.600 21 30.500 16.300 30.700 11.600 30.500 7.600 26.600 7.100 23 5.500 21 5.600 17 7.600 15.400 8.600 12.400 11.800 10.400 16.300 10.400z" fill="#5f0b24"/><path d="M16.300 11.200C20.400 11.200 23.200 13 24.200 15.800 26 17.300 26.100 20.700 24.700 22.600 24.200 25.900 20.600 29.600 16.300 29.800 12 29.600 8.400 25.900 7.900 22.600 6.500 20.700 6.600 17.300 8.400 15.800 9.400 13 12.200 11.200 16.300 11.200z" fill="#86113a"/><circle cx="16.1" cy="12.7" r="2.5" fill="#b3264f"/><circle cx="10.6" cy="14.2" r="2.0" fill="#b3264f"/><circle cx="21.8" cy="14.2" r="2.0" fill="#b3264f"/><circle cx="12.6" cy="17.7" r="2.9" fill="#b3264f"/><circle cx="19.9" cy="17.7" r="2.9" fill="#b3264f"/><circle cx="8.1" cy="18.7" r="2.0" fill="#b3264f"/><circle cx="24.5" cy="18.9" r="2.0" fill="#b3264f"/><circle cx="16.1" cy="23.3" r="2.9" fill="#b3264f"/><circle cx="10.1" cy="23.6" r="2.3" fill="#b3264f"/><circle cx="22.4" cy="23.6" r="2.3" fill="#b3264f"/><circle cx="16.1" cy="28.3" r="2.1" fill="#b3264f"/><circle cx="16.1" cy="12.5" r="1.38" fill="#c03158" opacity=".8"/><circle cx="10.6" cy="14.0" r="1.10" fill="#c03158" opacity=".8"/><circle cx="21.8" cy="14.0" r="1.10" fill="#c03158" opacity=".8"/><circle cx="12.6" cy="17.5" r="1.59" fill="#c03158" opacity=".8"/><circle cx="19.9" cy="17.5" r="1.59" fill="#c03158" opacity=".8"/><circle cx="8.1" cy="18.5" r="1.10" fill="#c03158" opacity=".8"/><circle cx="24.5" cy="18.7" r="1.10" fill="#c03158" opacity=".8"/><circle cx="16.1" cy="23.1" r="1.59" fill="#c03158" opacity=".8"/></svg></div><div class="nm">rpi2.0</div><div class="sep" style="left:0px"></div><div class="sep" style="left:50px"></div><div class="sep" style="left:102px"></div><div class="sep" style="left:377px"></div><div class="sep" style="left:668px"></div><div class="sep" style="left:890px"></div><div class="sep" style="left:1080px"></div><div class="btn g b1"><svg viewBox="0 0 24 24"><path d="M6 19h4V5H6v14zm8-14v14h4V5h-4z"/></svg></div><div class="btn b2"><svg viewBox="0 0 24 24"><path d="M22.7 19l-9.1-9.1c.9-2.3.4-5-1.5-6.9-2-2-5-2.4-7.4-1.300L9 6 6 9 1.600 4.700C.400 7.100.900 10.100 2.900 12.100c1.900 1.900 4.600 2.400 6.900 1.500l9.100 9.100c.400.400 1 .400 1.400 0l2.300-2.300c.500-.400.500-1.100.100-1.400z"/></svg></div><div class="btn b3"><svg viewBox="0 0 24 24"><path d="M17.650 6.350C16.200 4.900 14.210 4 12 4c-4.420 0-7.990 3.580-7.990 8s3.570 8 7.990 8c3.730 0 6.840-2.550 7.730-6h-2.080c-.820 2.330-3.040 4-5.650 4-3.310 0-6-2.690-6-6s2.690-6 6-6c1.660 0 3.140.690 4.220 1.780L13 11h7V4l-2.350 2.350z"/></svg></div><div class="btn b4"><svg viewBox="0 0 24 24"><path d="M6 19c0 1.100.900 2 2 2h8c1.100 0 2-.900 2-2V7H6v12zM19 4h-3.500l-1-1h-5l-1 1H5v2h14V4z"/></svg></div><div class="ti">RPI-Monitor</div><div class="rm">72.4 MB</div></div>
<div class="row alt" style="top:452px"><div class="led"></div><div class="aicon"><svg width="33" height="33" viewBox="0 0 33 33"><circle cx="16.460" cy="16.850" r="13.400" fill="none" stroke="#101010" stroke-width="2"/><path d="M21.800 8.800L13.700 15.650h4.200z" fill="#101010"/><path d="M11.050 24.600L19.600 17.450l-4.200 .15z" fill="#101010"/></svg></div><div class="nm">simple-api.0</div><div class="sep" style="left:0px"></div><div class="sep" style="left:50px"></div><div class="sep" style="left:102px"></div><div class="sep" style="left:377px"></div><div class="sep" style="left:668px"></div><div class="sep" style="left:890px"></div><div class="sep" style="left:1080px"></div><div class="btn g b1"><svg viewBox="0 0 24 24"><path d="M6 19h4V5H6v14zm8-14v14h4V5h-4z"/></svg></div><div class="btn b2"><svg viewBox="0 0 24 24"><path d="M22.7 19l-9.1-9.1c.9-2.3.4-5-1.5-6.9-2-2-5-2.4-7.4-1.300L9 6 6 9 1.600 4.700C.400 7.100.900 10.100 2.900 12.100c1.900 1.900 4.600 2.400 6.900 1.500l9.100 9.100c.400.400 1 .400 1.400 0l2.300-2.300c.500-.400.500-1.100.100-1.400z"/></svg></div><div class="btn b3"><svg viewBox="0 0 24 24"><path d="M17.650 6.350C16.200 4.900 14.210 4 12 4c-4.420 0-7.990 3.580-7.990 8s3.570 8 7.990 8c3.730 0 6.840-2.550 7.730-6h-2.080c-.820 2.330-3.040 4-5.650 4-3.310 0-6-2.690-6-6s2.690-6 6-6c1.660 0 3.140.690 4.220 1.780L13 11h7V4l-2.350 2.350z"/></svg></div><div class="btn b4"><svg viewBox="0 0 24 24"><path d="M6 19c0 1.100.900 2 2 2h8c1.100 0 2-.900 2-2V7H6v12zM19 4h-3.500l-1-1h-5l-1 1H5v2h14V4z"/></svg></div><div class="btn b5"><svg viewBox="0 0 24 24"><path d="M21 3.010H3c-1.100 0-2 .900-2 2V9h2V4.990h18v14.030H3V15H1v4.010c0 1.100.900 1.980 2 1.980h18c1.100 0 2-.880 2-1.980v-14c0-1.110-.900-2-2-2zM11 16l4-4-4-4v3H1v2h10v3z"/></svg></div><div class="ti">Simple RESTful API</div><div class="rm">62.3 MB</div></div>
<div class="row" style="top:511px"><div class="led"></div><div class="aicon"><svg width="33" height="33" viewBox="0 0 33 33"><circle cx="16.460" cy="16.850" r="13.400" fill="none" stroke="#101010" stroke-width="2"/><path d="M21.800 8.800L13.700 15.650h4.200z" fill="#101010"/><path d="M11.050 24.600L19.600 17.450l-4.200 .15z" fill="#101010"/></svg></div><div class="nm">socketio.0</div><div class="sep" style="left:0px"></div><div class="sep" style="left:50px"></div><div class="sep" style="left:102px"></div><div class="sep" style="left:377px"></div><div class="sep" style="left:668px"></div><div class="sep" style="left:890px"></div><div class="sep" style="left:1080px"></div><div class="btn g b1"><svg viewBox="0 0 24 24"><path d="M6 19h4V5H6v14zm8-14v14h4V5h-4z"/></svg></div><div class="btn b2"><svg viewBox="0 0 24 24"><path d="M22.7 19l-9.1-9.1c.9-2.3.4-5-1.5-6.9-2-2-5-2.4-7.4-1.300L9 6 6 9 1.600 4.700C.400 7.100.900 10.100 2.900 12.100c1.900 1.900 4.600 2.400 6.900 1.500l9.100 9.100c.400.400 1 .400 1.400 0l2.300-2.300c.500-.400.500-1.100.100-1.400z"/></svg></div><div class="btn b3"><svg viewBox="0 0 24 24"><path d="M17.650 6.350C16.200 4.900 14.210 4 12 4c-4.420 0-7.990 3.580-7.990 8s3.570 8 7.990 8c3.730 0 6.840-2.550 7.730-6h-2.080c-.820 2.330-3.040 4-5.650 4-3.310 0-6-2.690-6-6s2.690-6 6-6c1.660 0 3.140.690 4.220 1.780L13 11h7V4l-2.350 2.350z"/></svg></div><div class="btn b4"><svg viewBox="0 0 24 24"><path d="M6 19c0 1.100.900 2 2 2h8c1.100 0 2-.900 2-2V7H6v12zM19 4h-3.500l-1-1h-5l-1 1H5v2h14V4z"/></svg></div><div class="ti">socket.io</div><div class="rm">63.4 MB</div></div>
<div class="row alt" style="top:570px"><div class="led"></div><div class="aicon"><svg width="33" height="33" viewBox="0 0 33 33"><defs><radialGradient id="gl" cx=".5" cy=".4" r=".65"><stop offset="0" stop-color="#7fd2ea"/><stop offset=".45" stop-color="#4b9fcc"/><stop offset="1" stop-color="#1f5278"/></radialGradient><filter id="wb" x="-20%" y="-20%" width="140%" height="140%"><feGaussianBlur stdDeviation=".8"/></filter></defs><ellipse cx="20.800" cy="14.200" rx="9" ry="10" fill="#dceaf0" opacity=".7"/><ellipse cx="20.800" cy="14.200" rx="7.900" ry="9.200" fill="url(#gl)"/><g filter="url(#wb)"><path d="M14.600 9.400c1.600-3 4.400-4.600 7.400-4.400-1 2-1.600 3.400-2.800 5-1.200 1.400-.8 3-2.200 3.800-1.400.2-2.200-2-2.400-4.400z" fill="#4c9e66"/><path d="M21.600 17.400c1.800-.8 3.800-.6 4.800.6-1 2.200-2.800 3.800-4.800 4.400-.8-1.800-.9-4 0-5z" fill="#1f5572" opacity=".8"/></g><rect x="3.600" y="8.600" width="10.200" height="18.800" rx="1" fill="#d3d9dd"/><rect x="4.200" y="9.400" width="9" height="17.300" rx=".6" fill="#f7f8f9"/><path d="M5.600 14.400h6M5.600 17.400h6M5.600 20.400h6" stroke="#ebe6e2" stroke-width="1.100"/></svg></div><div class="nm">web.0</div><div class="sep" style="left:0px"></div><div class="sep" style="left:50px"></div><div class="sep" style="left:102px"></div><div class="sep" style="left:377px"></div><div class="sep" style="left:668px"></div><div class="sep" style="left:890px"></div><div class="sep" style="left:1080px"></div><div class="btn g b1"><svg viewBox="0 0 24 24"><path d="M6 19h4V5H6v14zm8-14v14h4V5h-4z"/></svg></div><div class="btn b2"><svg viewBox="0 0 24 24"><path d="M22.7 19l-9.1-9.1c.9-2.3.4-5-1.5-6.9-2-2-5-2.4-7.4-1.300L9 6 6 9 1.600 4.700C.400 7.100.900 10.100 2.900 12.100c1.900 1.900 4.600 2.400 6.900 1.500l9.100 9.100c.400.400 1 .400 1.400 0l2.300-2.300c.500-.400.500-1.100.100-1.400z"/></svg></div><div class="btn b3"><svg viewBox="0 0 24 24"><path d="M17.650 6.350C16.200 4.900 14.210 4 12 4c-4.420 0-7.990 3.580-7.990 8s3.570 8 7.990 8c3.730 0 6.840-2.550 7.730-6h-2.080c-.820 2.330-3.040 4-5.650 4-3.310 0-6-2.690-6-6s2.690-6 6-6c1.660 0 3.140.690 4.220 1.780L13 11h7V4l-2.350 2.350z"/></svg></div><div class="btn b4"><svg viewBox="0 0 24 24"><path d="M6 19c0 1.100.900 2 2 2h8c1.100 0 2-.900 2-2V7H6v12zM19 4h-3.500l-1-1h-5l-1 1H5v2h14V4z"/></svg></div><div class="btn b5"><svg viewBox="0 0 24 24"><path d="M21 3.010H3c-1.100 0-2 .900-2 2V9h2V4.990h18v14.030H3V15H1v4.010c0 1.100.900 1.980 2 1.980h18c1.100 0 2-.880 2-1.980v-14c0-1.110-.900-2-2-2zM11 16l4-4-4-4v3H1v2h10v3z"/></svg></div><div class="ti">WEB-Server</div><div class="rm">64.4 MB</div></div>
<div class="row" style="top:629px"><div class="led err"></div><div class="aicon"><svg width="33" height="33" viewBox="0 0 33 33"><circle cx="16.500" cy="16.300" r="15.200" fill="#f9d3dc" opacity=".7"/><circle cx="16.500" cy="16.300" r="14.300" fill="#b12a50"/><circle cx="15.300" cy="16.100" r="7.700" fill="#fbeff3"/><path d="M11.400 14.600l2.600-1.400 2 1 2.600-1.800M12.400 17.800l3-1.400 2.400.6 1.400-1M13.400 20.200h5.200" stroke="#e4dde0" stroke-width="1.100" fill="none"/><path d="M23.300 18.900l3.300 3.200" stroke="#f5b3c9" stroke-width="1.900" stroke-linecap="round"/><circle cx="22" cy="19.700" r=".9" fill="#5c1428"/></svg></div><div class="nm">echarts.0</div><div class="sep" style="left:0px"></div><div class="sep" style="left:50px"></div><div class="sep" style="left:102px"></div><div class="sep" style="left:377px"></div><div class="sep" style="left:668px"></div><div class="sep" style="left:890px"></div><div class="sep" style="left:1080px"></div><div class="btn dis b2"><svg viewBox="0 0 24 24"><path d="M22.7 19l-9.1-9.1c.9-2.3.4-5-1.5-6.9-2-2-5-2.4-7.4-1.300L9 6 6 9 1.600 4.700C.400 7.100.900 10.100 2.900 12.100c1.900 1.900 4.600 2.400 6.900 1.500l9.100 9.100c.400.400 1 .400 1.400 0l2.300-2.300c.500-.400.500-1.100.100-1.400z"/></svg></div><div class="btn b4"><svg viewBox="0 0 24 24"><path d="M6 19c0 1.100.900 2 2 2h8c1.100 0 2-.900 2-2V7H6v12zM19 4h-3.500l-1-1h-5l-1 1H5v2h14V4z"/></svg></div><div class="ti">E-Charts</div><div class="rm"></div></div></div>
</body>
</html>
